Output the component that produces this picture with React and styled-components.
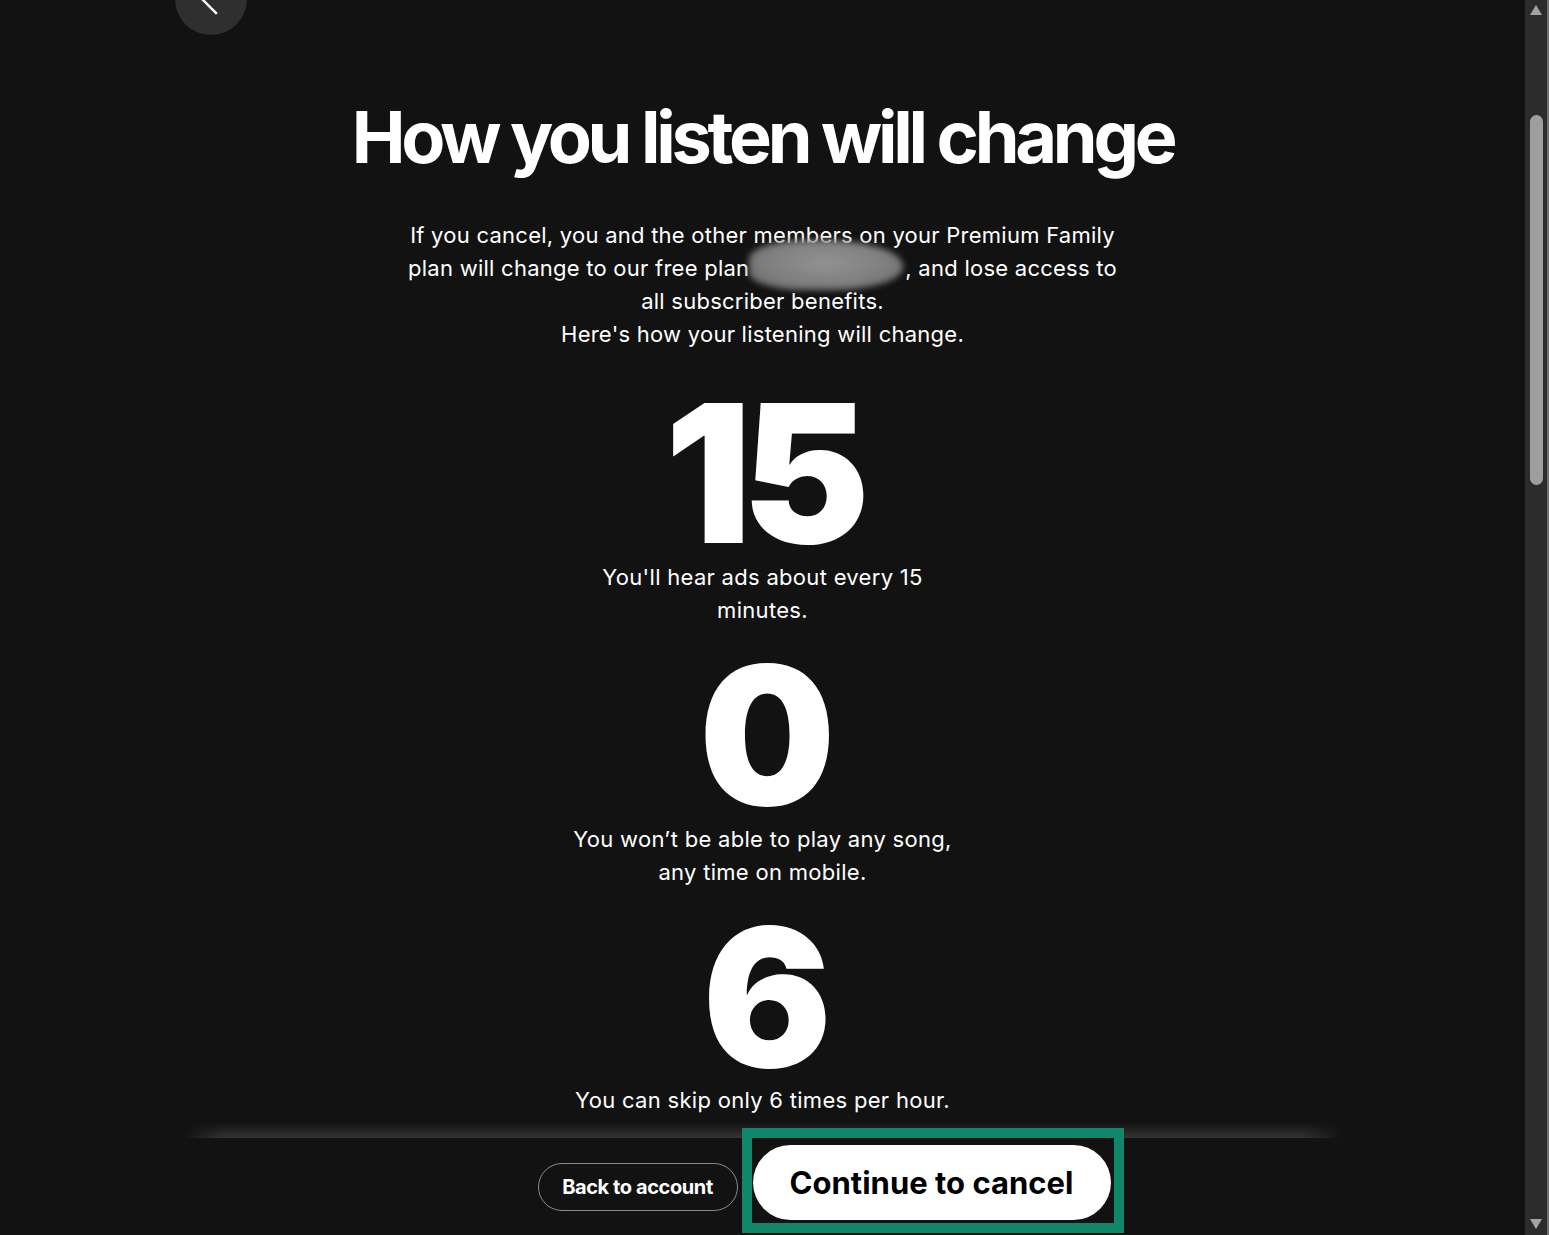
import styled, { createGlobalStyle } from "styled-components";

const GlobalStyle = createGlobalStyle`
  html, body {
    margin: 0;
    height: 100%;
    overflow: hidden;
    background: #121212;
  }
  #root {
    height: 100%;
  }
`;

const stats = [
  { value: "15", text: "You'll hear ads about every 15 minutes." },
  { value: "0", text: "You won’t be able to play any song, any time on mobile." },
  { value: "6", text: "You can skip only 6 times per hour." },
];

const App = () => {
  return (
    <>
      <GlobalStyle />
      <Window>
        <Page>
          <Scroller>
            <TopBar>
              <BackCircle aria-label="Back">
                <svg width="72" height="72" viewBox="0 0 72 72">
                  <path
                    d="M41 22 L27 36 L41 50"
                    fill="none"
                    stroke="#fff"
                    strokeWidth="2.4"
                    strokeLinecap="square"
                  />
                </svg>
              </BackCircle>
            </TopBar>
            <Heading>How you listen will change</Heading>
            <Intro>
              If you cancel, you and the other members on your Premium Family
              plan will change to our free plan
              <Redacted aria-hidden="true" />, and lose access to all
              subscriber benefits.
              <br />
              Here's how your listening will change.
            </Intro>
            <StatList>
              {stats.map((s) => (
                <Stat key={s.value}>
                  <StatValue>{s.value}</StatValue>
                  <StatText>{s.text}</StatText>
                </Stat>
              ))}
            </StatList>
          </Scroller>
          <Footer>
            <OutlineButton>Back to account</OutlineButton>
            <Highlight>
              <PrimaryButton>Continue to cancel</PrimaryButton>
            </Highlight>
          </Footer>
        </Page>
        <ScrollBar>
          <Arrow $dir="up" />
          <Thumb />
          <Spacer />
          <Arrow $dir="down" />
        </ScrollBar>
      </Window>
    </>
  );
};
export default App;

const Window = styled.div`
  height: 100%;
  display: flex;
  background: #121212;
  font-family: Inter, "Noto Sans", "Liberation Sans", sans-serif;
  color: #fff;
`;

const Page = styled.div`
  flex: 1;
  min-width: 0;
  display: flex;
  flex-direction: column;
`;

const Scroller = styled.div`
  flex: 1;
  min-height: 0;
  overflow: hidden;
  display: flex;
  flex-direction: column;
  align-items: center;
`;

const TopBar = styled.div`
  align-self: stretch;
  padding-left: 175px;
  margin-top: -37px;
`;

const BackCircle = styled.button`
  width: 72px;
  height: 72px;
  padding: 0;
  border: none;
  border-radius: 50%;
  background: #2f2f2f;
  display: flex;
  align-items: center;
  justify-content: center;
`;

const Heading = styled.h1`
  margin: 62px 0 0;
  font-size: 72px;
  line-height: 80px;
  font-weight: 700;
  letter-spacing: -0.059em;
  text-align: center;
  white-space: nowrap;
`;

const Intro = styled.p`
  margin: 42px 0 0;
  max-width: 716px;
  font-size: 22px;
  line-height: 33px;
  font-weight: 400;
  letter-spacing: 0.25px;
  text-align: center;
`;

const Redacted = styled.span`
  position: relative;
  display: inline-block;
  width: 156px;
  height: 1em;

  &::after {
    content: "";
    position: absolute;
    left: 0;
    right: 2px;
    top: -14px;
    bottom: -14px;
    border-radius: 38% 52% 45% 35%;
    background: radial-gradient(
      ellipse at 50% 45%,
      #929292 0%,
      #7f7f7f 55%,
      #626262 100%
    );
    filter: blur(3px);
  }
`;

const StatList = styled.div`
  margin-top: 36px;
  display: flex;
  flex-direction: column;
  align-items: center;
  gap: 22px;
`;

const Stat = styled.div`
  display: flex;
  flex-direction: column;
  align-items: center;
`;

const StatValue = styled.div`
  font-size: 192px;
  line-height: 0.9;
  font-weight: 900;
  letter-spacing: -0.05em;
`;

const StatText = styled.div`
  margin-top: 1px;
  max-width: 395px;
  font-size: 22px;
  line-height: 33px;
  text-align: center;
  letter-spacing: 0.3px;
`;

const Footer = styled.div`
  position: relative;
  z-index: 1;
  height: 97px;
  width: 1160px;
  margin: 0 auto;
  background: #121212;
  display: flex;
  align-items: flex-start;
  justify-content: center;
  gap: 4px;
  padding-left: 136px;
  box-sizing: border-box;

  &::before {
    content: "";
    position: absolute;
    left: 0;
    right: 0;
    bottom: 100%;
    height: 18px;
    background: linear-gradient(
      to top,
      rgba(255, 255, 255, 0.14),
      rgba(255, 255, 255, 0.03) 70%,
      rgba(255, 255, 255, 0)
    );
    -webkit-mask-image: linear-gradient(
      to right,
      transparent 0,
      #000 40px,
      #000 calc(100% - 40px),
      transparent 100%
    );
    mask-image: linear-gradient(
      to right,
      transparent 0,
      #000 40px,
      #000 calc(100% - 40px),
      transparent 100%
    );
  }
`;

const OutlineButton = styled.button`
  margin-top: 25px;
  width: 200px;
  height: 48px;
  border: 1px solid #8a8a8a;
  border-radius: 999px;
  background: transparent;
  color: #fff;
  font-family: inherit;
  font-size: 20px;
  font-weight: 700;
  letter-spacing: -0.02em;
`;

const Highlight = styled.div`
  position: relative;
  margin-top: -10px;
  border: 10px solid #10866a;
  padding: 7px 3px 3px 1px;
  background: #121212;
`;

const PrimaryButton = styled.button`
  display: block;
  width: 358px;
  height: 75px;
  border: none;
  border-radius: 999px;
  background: #fff;
  color: #000;
  font-family: inherit;
  font-size: 31px;
  font-weight: 700;
  letter-spacing: 0;
`;

const ScrollBar = styled.div`
  width: 22px;
  flex-shrink: 0;
  background: #2c2c2c;
  border-right: 2px solid #707070;
  display: flex;
  flex-direction: column;
  align-items: center;
`;

const Arrow = styled.div`
  width: 0;
  height: 0;
  margin: ${({ $dir }) => ($dir === "up" ? "5px 0 0" : "0 0 6px")};
  border-left: 6px solid transparent;
  border-right: 6px solid transparent;
  ${({ $dir }) =>
    $dir === "up"
      ? "border-bottom: 10px solid #a3a3a3;"
      : "border-top: 10px solid #a3a3a3;"}
`;

const Thumb = styled.div`
  margin-top: 100px;
  width: 13px;
  height: 370px;
  border-radius: 7px;
  background: #9e9e9e;
`;

const Spacer = styled.div`
  flex: 1;
`;
